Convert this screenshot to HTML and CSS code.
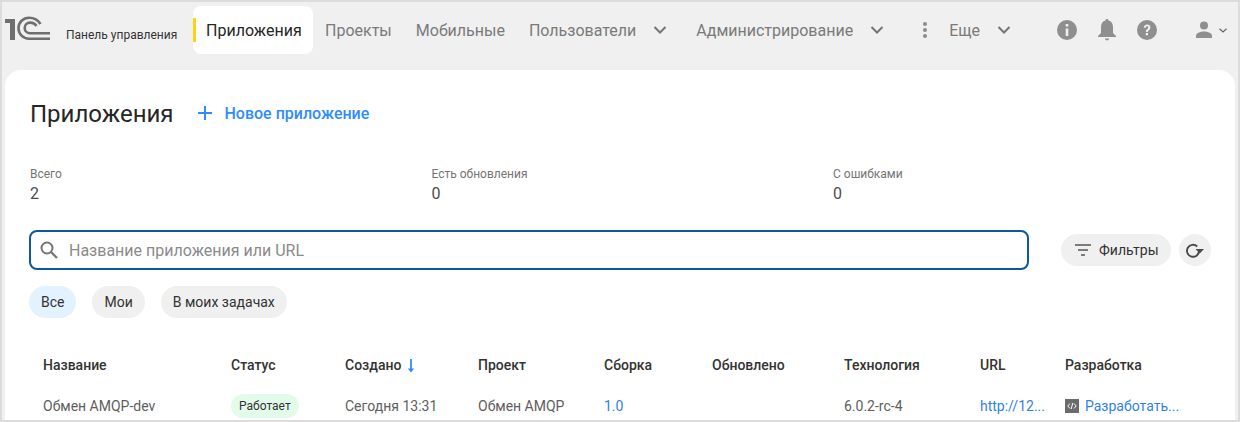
FILE: index.html
```html
<!DOCTYPE html>
<html lang="ru">
<head>
<meta charset="utf-8">
<title>Приложения</title>
<link rel="stylesheet" href="styles.css">
</head>
<body>
<div class="frame">
  <header class="top">
    <div class="brand">
      <svg class="logo" width="46" height="24" viewBox="0 0 46 24" aria-hidden="true">
        <path d="M0 3h10v21H5V7H0z" fill="#6f6f6f"/>
        <path d="M45 22.700H24a10.500 10.500 0 0 1 0-21c5 0 9 2 11.500 6.300" fill="none" stroke="#6f6f6f" stroke-width="2.600"/>
        <path d="M45 17.200H25a5.300 5.300 0 0 1 0-10.600c2.500 0 5 1 6.500 3.400" fill="none" stroke="#6f6f6f" stroke-width="2.600"/>
      </svg>
      <span class="brand-name">Панель управления</span>
    </div>
    <nav class="nav">
      <a class="tab active">Приложения</a>
      <a class="tab">Проекты</a>
      <a class="tab">Мобильные</a>
      <a class="tab">Пользователи<svg class="chev" width="14" height="8" viewBox="0 0 14 8"><path d="M1.500 1l5.500 5.500L12.500 1" fill="none" stroke="#757575" stroke-width="2"/></svg></a>
      <a class="tab tab-admin">Администрирование<svg class="chev" width="14" height="8" viewBox="0 0 14 8"><path d="M1.500 1l5.500 5.500L12.500 1" fill="none" stroke="#757575" stroke-width="2"/></svg></a>
      <a class="tab tab-more">
        <svg class="dots" width="4" height="16" viewBox="0 0 4 16"><circle cx="2" cy="2" r="2" fill="#8c8c8c"/><circle cx="2" cy="8" r="2" fill="#8c8c8c"/><circle cx="2" cy="14" r="2" fill="#8c8c8c"/></svg>
        Еще<svg class="chev" width="14" height="8" viewBox="0 0 14 8"><path d="M1.500 1l5.500 5.500L12.500 1" fill="none" stroke="#757575" stroke-width="2"/></svg>
      </a>
    </nav>
    <div class="tools">
      <svg width="20" height="20" viewBox="0 0 20 20"><path fill-rule="evenodd" d="M10 0a10 10 0 1 1 0 20a10 10 0 0 1 0-20zM8.700 4h2.600v2.600H8.700zM8.700 8.500h2.600V16H8.700z" fill="#8f8f8f"/></svg>
      <svg width="18" height="22" viewBox="0 0 18 22"><path d="M9 0a1.500 1.500 0 0 1 1.500 1.600C13.500 2.300 15 5 15 8v6l3 3v1H0v-1l3-3V8c0-3 1.500-5.700 4.500-6.400A1.500 1.500 0 0 1 9 0zM7 19.500h4a2 2 0 0 1-4 0z" fill="#8f8f8f"/></svg>
      <svg width="20" height="20" viewBox="0 0 20 20"><circle cx="10" cy="10" r="10" fill="#8f8f8f"/><path d="M6.800 7.700C6.800 5.800 8.200 4.500 10.100 4.500c2 0 3.300 1.200 3.300 2.900 0 2.400-2.500 2.500-2.500 4.600H8.900c0-3 2.400-3.100 2.400-4.600 0-.7-.5-1.200-1.200-1.200-.8 0-1.300.6-1.300 1.500z" fill="#f0f0f0"/><rect x="8.800" y="13" width="2.200" height="2.300" fill="#f0f0f0"/></svg>
      <span class="user">
        <svg width="18" height="18" viewBox="0 0 18 18"><circle cx="9" cy="4.500" r="4" fill="#8f8f8f"/><path d="M1 17v-2c0-3 4-4.500 8-4.500s8 1.500 8 4.500v2z" fill="#8f8f8f"/></svg>
        <svg width="8" height="5" viewBox="0 0 8 5"><path d="M.5.700L4 4 7.500.700" fill="none" stroke="#666" stroke-width="1.200"/></svg>
      </span>
    </div>
  </header>

  <main class="card">
    <div class="title-row">
      <h1 class="title">Приложения</h1>
      <a class="new">
        <svg width="14" height="14" viewBox="0 0 14 14"><path d="M7 0v14M0 7h14" stroke="#2f8cff" stroke-width="2"/></svg>
        Новое приложение
      </a>
    </div>

    <div class="stats">
      <div class="stat"><div class="stat-label">Всего</div><div class="stat-value">2</div></div>
      <div class="stat"><div class="stat-label">Есть обновления</div><div class="stat-value">0</div></div>
      <div class="stat"><div class="stat-label">С ошибками</div><div class="stat-value">0</div></div>
    </div>

    <div class="search-row">
      <div class="search">
        <svg width="18" height="18" viewBox="0 0 18 18"><circle cx="7" cy="7" r="5.500" fill="none" stroke="#757575" stroke-width="2"/><path d="M11 11l6 6" stroke="#757575" stroke-width="2.200"/></svg>
        <span class="placeholder">Название приложения или URL</span>
      </div>
      <button class="filters">
        <svg width="16" height="12" viewBox="0 0 16 12"><path d="M0 1h16M3 6h10M6 11h4" stroke="#555" stroke-width="1.600"/></svg>
        Фильтры
      </button>
      <button class="refresh">
        <svg width="18" height="18" viewBox="0 0 18 18"><path d="M13 10a6 6 0 1 1-1.800-4.500" fill="none" stroke="#4a4a4a" stroke-width="1.900"/><path d="M9.500 8H18L13.800 12.500z" fill="#4a4a4a"/></svg>
      </button>
    </div>

    <div class="chips">
      <span class="chip on">Все</span>
      <span class="chip">Мои</span>
      <span class="chip">В моих задачах</span>
    </div>

    <div class="table">
      <div class="th">Название</div>
      <div class="th">Статус</div>
      <div class="th">Создано <svg class="sort" width="8" height="14" viewBox="0 0 8 14"><path d="M4 0v12" stroke="#2f8cff" stroke-width="1.800"/><path d="M.8 9.500L4 13.500l3.200-4z" fill="#2f8cff"/></svg></div>
      <div class="th">Проект</div>
      <div class="th">Сборка</div>
      <div class="th">Обновлено</div>
      <div class="th">Технология</div>
      <div class="th">URL</div>
      <div class="th">Разработка</div>

      <div class="td">Обмен AMQP-dev</div>
      <div class="td"><span class="badge">Работает</span></div>
      <div class="td">Сегодня 13:31</div>
      <div class="td">Обмен AMQP</div>
      <div class="td"><a class="link">1.0</a></div>
      <div class="td"></div>
      <div class="td">6.0.2-rc-4</div>
      <div class="td"><a class="link">http://12...</a></div>
      <div class="td dev">
        <svg width="14" height="14" viewBox="0 0 14 14"><rect width="14" height="14" fill="#6b6b6b"/><path d="M5 4.500L2.800 7 5 9.500M9 4.500L11.200 7 9 9.500M7.800 4L6.200 10" fill="none" stroke="#fff" stroke-width="1"/></svg>
        <a class="link">Разработать...</a>
      </div>
    </div>
  </main>
</div>
</body>
</html>
```
FILE: styles.css
```css
* { box-sizing: border-box; }
html, body { margin: 0; height: 100%; }
body { font-family: Roboto, "Liberation Sans", sans-serif; color: #262626; overflow: hidden; }
.frame {
  width: 1240px; height: 422px; overflow: hidden;
  background: #f0f0f0;
  border: 2px solid #dcdcdc;
  padding: 0 3px;
}
.top { display: flex; align-items: flex-start; height: 68px; margin: 0 -3px; padding-left: 3px; }
.brand { display: flex; align-items: center; height: 48px; margin-top: 4px; width: 188px; flex: none; }
.logo { flex: none; margin: -4px 15px 0 0; }
.brand-name { font-size: 12px; color: #333; white-space: nowrap; padding-top: 9px; }
.nav { display: flex; align-items: stretch; margin-top: 4px; height: 48px; flex: none; }
.tab { display: flex; align-items: center; font-size: 16px; color: #7a7a7a; padding: 0 12px; white-space: nowrap; }
.tab.active { position: relative; background: #fff; color: #262626; border-radius: 8px; padding: 0 12px 0 13px; width: 120px; }
.tab.active::before { content: ""; position: absolute; left: 0; top: 12px; width: 3px; height: 24px; background: #fbd50f; }
.chev { margin-left: 17px; flex: none; }
.tab-admin { margin-left: 5px; }
.tab-more { padding-left: 27px; }
.dots { margin-right: 22px; flex: none; }
.tools { display: flex; align-items: center; height: 48px; margin-top: 4px; gap: 21px; margin-left: 34px; }
.user { display: flex; align-items: center; gap: 6px; margin-left: 17px; }
.card { background: #fff; border-radius: 16px 16px 0 0; height: 352px; padding: 0 24px; }
.title-row { display: flex; align-items: center; height: 88px; }
.title { font-size: 24px; font-weight: 400; margin: 0 0 0 1px; color: #262626; }
.new { display: flex; align-items: center; gap: 13px; margin-left: 24px; margin-top: -2px; font-size: 16px; font-weight: 500; color: #2f8cff; }
.stats { display: grid; grid-template-columns: 401.500px 401.500px 1fr; margin: 8px 0 0 1px; }
.stat-label { font-size: 12px; line-height: 16px; color: #757575; }
.stat-value { font-size: 16px; line-height: 24px; color: #4d4d4d; }
.search-row { display: flex; align-items: center; margin-top: 24px; }
.search { display: flex; align-items: center; gap: 11px; width: 1000px; height: 40px; border: 2px solid #0c57a0; border-radius: 8px; padding-left: 9px; }
.placeholder { font-size: 16px; color: #8a8a8a; }
.filters { display: flex; align-items: center; gap: 8px; margin-left: 32px; width: 110px; height: 32px; border: 0; border-radius: 16px; background: #f0f0f0; font: 14px Roboto, sans-serif; color: #333; padding: 0 0 0 14px; }
.refresh { display: flex; align-items: center; justify-content: center; margin-left: 8px; width: 32px; height: 32px; border: 0; border-radius: 50%; background: #f0f0f0; padding: 0; }
.chips { display: flex; gap: 16px; margin-top: 16px; }
.chip { height: 32px; line-height: 32px; padding: 0 12px; border-radius: 16px; background: #f0f0f0; font-size: 14px; color: #333; }
.chip.on { background: #e3f2ff; }
.table { display: grid; grid-template-columns: 188px 114px 133px 126px 108px 132px 136px 85px 1fr; margin-top: 32px; margin-left: 14px; grid-auto-rows: 40px; }
.th { display: flex; align-items: center; gap: 6px; font-size: 14px; font-weight: 500; color: #333; height: 30px; }
.td { display: flex; align-items: center; font-size: 14px; color: #5e5e5e; height: 40px; white-space: nowrap; margin-top: -4px; }
.sort { flex: none; margin-top: 2px; }
.badge { display: inline-flex; align-items: center; height: 24px; padding: 0 8px; border-radius: 12px; background: #e3fbea; color: #333; font-size: 12px; }
.link { color: #2f7ff0; }
.dev { gap: 6px; }
```
